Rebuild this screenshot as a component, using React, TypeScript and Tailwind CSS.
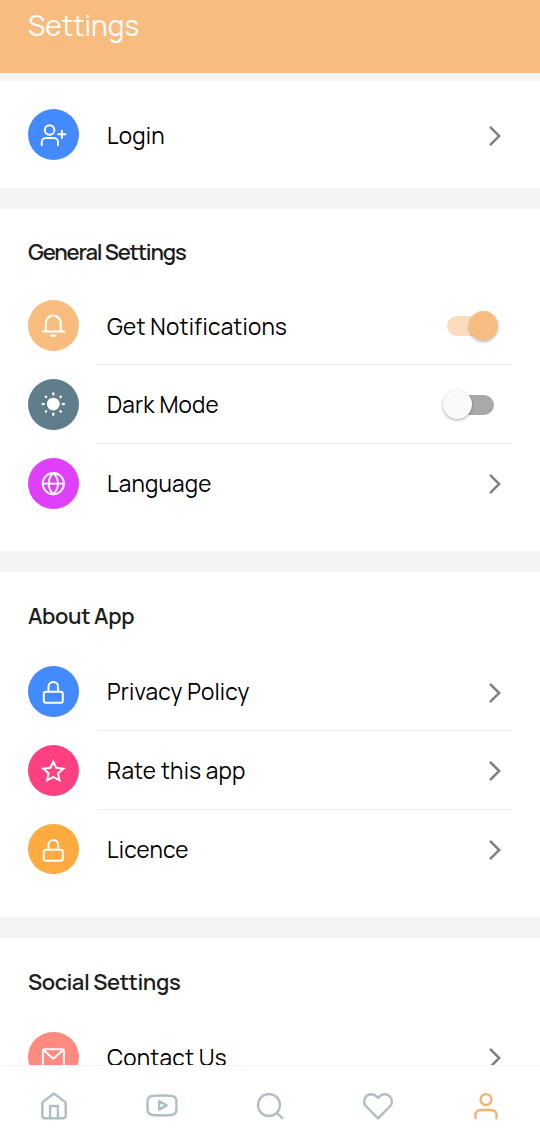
import type { ReactNode } from "react";

type RowProps = {
  icon: ReactNode;
  color: string;
  label: string;
  divider?: boolean;
  action?: ReactNode;
};

function Glyph({ children }: { children: ReactNode }) {
  return (
    <svg
      viewBox="0 0 50.6 50.6"
      className="size-full"
      fill="none"
      stroke="#fff"
      strokeWidth="2"
      strokeLinecap="round"
      strokeLinejoin="round"
    >
      {children}
    </svg>
  );
}

const UserPlus = () => (
  <Glyph>
    <circle cx="21.6" cy="21" r="4.8" />
    <path d="M13.7 36.3v-3.1a4.3 4.3 0 0 1 4.3-4.3h7.7a4.3 4.3 0 0 1 4.3 4.3v3.1M33.9 21.7v7.2M30.3 25.3h7.2" />
  </Glyph>
);
const Bell = () => (
  <Glyph>
    <path d="M14.9 31.5h21.2M17.9 31.3v-8.3a7.4 7.4 0 0 1 14.8 0v8.3" />
    <path d="M22.5 35.2q2.8 2.5 5.6 0z" fill="#fff" strokeWidth="1.2" />
  </Glyph>
);
const Sun = () => (
  <Glyph>
    <circle cx="25.3" cy="25.1" r="6.4" fill="#fff" stroke="none" />
    <path
      strokeWidth="2.3"
      d="M25.3 14.4v1.2M25.3 34.6v1.2M14.6 25.1h1.2M34.8 25.1h1.2M17.8 17.6l.4.4M32.4 32.2l.4.4M32.8 17.6l-.4.4M18.2 32.2l-.4.4"
    />
  </Glyph>
);
const Globe = () => (
  <Glyph>
    <circle cx="25.3" cy="25.6" r="10.6" />
    <path
      strokeWidth="1.9"
      d="M14.7 25.6h21.2M25.3 15c-6.2 5.8-6.2 15.4 0 21.2M25.3 15c6.2 5.8 6.2 15.4 0 21.2"
    />
  </Glyph>
);
const Lock = () => (
  <Glyph>
    <rect x="15.8" y="25.8" width="19" height="11" rx="2" />
    <path d="M20.5 25.5v-4.8a4.8 4.8 0 0 1 9.6 0v4.8" />
  </Glyph>
);
const Star = () => (
  <Glyph>
    <path
      strokeLinejoin="miter"
      d="M25.3 16.7l2.9 6.1 7 .9-5.2 4.7 1.5 7-6.2-3.5-6.2 3.5 1.500-7-5.200-4.700 7-.9z"
    />
  </Glyph>
);
const Mail = () => (
  <Glyph>
    <rect x="14.9" y="17.3" width="21" height="17.4" rx="1.6" />
    <path d="m15.4 18 9.9 8.8 9.9-8.8" />
  </Glyph>
);

function Chevron() {
  return (
    <svg
      viewBox="0 0 14 22"
      className="mr-[10px] mt-[3.4px] h-[22px] w-[14px]"
      fill="none"
      stroke="#808080"
      strokeWidth="2.5"
    >
      <path d="m2 1.8 9.2 9.2L2 20.2" />
    </svg>
  );
}

function Toggle({ on = false }: { on?: boolean }) {
  return (
    <span className="relative mr-[13px] mt-[1.6px] flex h-[30px] w-[57px] items-center pl-[5px]">
      <span
        className={
          on
            ? "h-5 w-[47px] rounded-full bg-[#fcdcbd]"
            : "h-5 w-[47px] rounded-full bg-[#a9a9a9]"
        }
      />
      <span
        className={
          on
            ? "absolute right-px top-0 size-[29px] rounded-full bg-[#f9bc7f] shadow-[0_2px_3px_rgba(0,0,0,0.26)]"
            : "absolute left-px top-0 size-[29px] rounded-full bg-[#fafafa] shadow-[0_1px_3px_rgba(0,0,0,0.35)]"
        }
      />
    </span>
  );
}

function Row({ icon, color, label, divider, action }: RowProps) {
  return (
    <div className="flex h-[78.75px] items-stretch px-7">
      <div className="flex w-[70px] shrink-0 items-center">
        <span className={`size-[50.6px] shrink-0 rounded-full ${color}`}>{icon}</span>
      </div>
      <div
        className={`flex flex-1 items-center justify-between border-b pl-[9px] ${
          divider ? "border-[#ececec]" : "border-transparent"
        }`}
      >
        <span className="whitespace-nowrap pt-[2.9px] text-[22.5px] leading-7 tracking-[0.2px] text-black">
          {label}
        </span>
        {action ?? <Chevron />}
      </div>
    </div>
  );
}

function Heading({ text, spacing }: { text: string; spacing: string }) {
  return (
    <h2 className={`whitespace-nowrap pl-7 text-[22px] font-semibold leading-7 text-[#1e1e1e] ${spacing}`}>
      {text}
    </h2>
  );
}

function NavIcon({ children, active = false }: { children: ReactNode; active?: boolean }) {
  return (
    <button className="flex flex-1 justify-center">
      <svg
        viewBox="0 0 36 36"
        className={active ? "size-9 text-[#f4b36e]" : "size-9 text-[#b0bec5]"}
        fill="none"
        stroke="currentColor"
        strokeWidth="2.4"
        strokeLinecap="round"
        strokeLinejoin="round"
      >
        {children}
      </svg>
    </button>
  );
}

export default function App() {
  return (
    <div className="flex h-[1141px] w-[540px] flex-col overflow-hidden bg-white font-['Manrope','Inter',sans-serif]">
      <header className="h-[72.5px] shrink-0 bg-[#f9bc7f] pl-7 pt-[9px]">
        <h1 className="text-[28px] leading-8 tracking-[0.1px] text-white">Settings</h1>
      </header>

      <main className="flex min-h-0 flex-1 flex-col overflow-hidden bg-[#f4f4f4] pt-[8.5px]">
        <section className="h-[107px] shrink-0 bg-white pt-[14.3px]">
          <Row icon={<UserPlus />} color="bg-[#448aff]" label="Login" />
        </section>

        <section className="mt-[21px] h-[342px] shrink-0 bg-white">
          <div className="h-[77.4px] pt-[29px]">
            <Heading text="General Settings" spacing="tracking-[-1.18px]" />
          </div>
          <Row icon={<Bell />} color="bg-[#f9bc7f]" label="Get Notifications" divider action={<Toggle on />} />
          <Row icon={<Sun />} color="bg-[#607d8b]" label="Dark Mode" divider action={<Toggle />} />
          <Row icon={<Globe />} color="bg-[#e040fb]" label="Language" />
        </section>

        <section className="mt-[21px] h-[345px] shrink-0 bg-white">
          <div className="h-[80.1px] pt-[30px]">
            <Heading text="About App" spacing="tracking-[-0.4px]" />
          </div>
          <Row icon={<Lock />} color="bg-[#448aff]" label="Privacy Policy" divider />
          <Row icon={<Star />} color="bg-[#ff4081]" label="Rate this app" divider />
          <Row icon={<Lock />} color="bg-[#ffab40]" label="Licence" />
        </section>

        <section className="mt-[21px] shrink-0 bg-white">
          <div className="h-[79.5px] pt-[30px]">
            <Heading text="Social Settings" spacing="tracking-[-0.43px]" />
          </div>
          <Row icon={<Mail />} color="bg-[#ff8a80]" label="Contact Us" />
        </section>
      </main>

      <nav className="flex h-[76px] shrink-0 items-center border-t border-[#f5f5f5] bg-white pt-[5px]">
        <NavIcon>
          <path d="M6.3 14.4 18 5.5l11.7 8.9v13.4a2.5 2.5 0 0 1-2.5 2.5H8.8a2.5 2.5 0 0 1-2.5-2.5z" />
          <path d="M14.1 30.2V18h7.8v12.2" strokeLinejoin="miter" />
        </NavIcon>
        <NavIcon>
          <path d="M18 7.5c4 0 7 .1 9.5.4 3.5.4 4.7 1.7 4.9 4.8.2 3.5.2 6.5 0 9.5-.2 3.1-1.4 4.4-4.9 4.8-5 .5-14 .5-19 0-3.5-.4-4.7-1.7-4.9-4.8-.2-3-.2-6 0-9.5.2-3.1 1.4-4.4 4.9-4.8 2.5-.3 5.5-.4 9.5-.4z" />
          <path d="m15.2 13.2 7.4 4.2-7.4 4.2z" />
        </NavIcon>
        <NavIcon>
          <circle cx="17" cy="17" r="11" />
          <path d="m25 25 5.2 5.2" />
        </NavIcon>
        <NavIcon>
          <path d="M18 30.3 6.2 18.5a7.2 7.2 0 0 1 10.2-10.2L18 9.9l1.6-1.6a7.2 7.2 0 0 1 10.2 10.2z" />
        </NavIcon>
        <NavIcon active>
          <circle cx="18" cy="11.5" r="5.4" />
          <path d="M7.5 30.3v-3.3a5 5 0 0 1 5-5h11a5 5 0 0 1 5 5v3.3" />
        </NavIcon>
      </nav>
    </div>
  );
}
